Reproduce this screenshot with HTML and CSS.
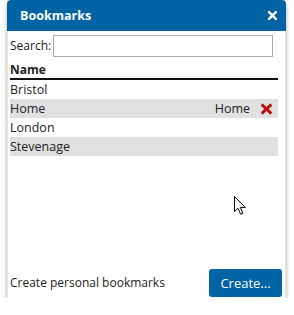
FILE: index.html
```html
<!DOCTYPE html>
<html>
<head>
<meta charset="utf-8">
<link rel="stylesheet" href="styles.css">
</head>
<body>
<div class="dialog">
  <div class="header">
    <span class="title">Bookmarks</span>
    <svg class="close" width="9" height="9" viewBox="0 0 9 9"><path d="M1 1 L8 8 M8 1 L1 8" stroke="#fff" stroke-width="2.4" stroke-linecap="square"/></svg>
  </div>
  <div class="content">
    <div class="search">
      <label>Search:</label>
      <input type="text" class="search-input">
    </div>
    <div class="list">
      <div class="list-head">Name</div>
      <div class="row"><span class="name">Bristol</span></div>
      <div class="row alt"><span class="name">Home</span><span class="right"><span class="tag">Home</span><svg class="del" width="13" height="12" viewBox="0 0 13 12"><path d="M1 2.5 L2.8 0.8 L6.5 4.4 L10.2 0.8 L12 2.5 L8.3 6 L12 9.5 L10.2 11.2 L6.5 7.6 L2.8 11.2 L1 9.5 L4.7 6 Z" fill="#d40000" stroke="#8a0000" stroke-width="0.6"/></svg></span></div>
      <div class="row"><span class="name">London</span></div>
      <div class="row alt"><span class="name">Stevenage</span></div>
    </div>
    <div class="footer">
      <span class="hint">Create personal bookmarks</span>
      <button class="create">Create...</button>
    </div>
  </div>
</div>
<svg class="cursor" width="13" height="20" viewBox="0 0 13 20"><path d="M0.5 0.5 L0.5 15.5 L4 12.2 L6.6 18.3 L8.9 17.3 L6.4 11.4 L11.3 11.4 Z" fill="#fff" stroke="#000" stroke-width="1" stroke-linejoin="round"/></svg>
</body>
</html>
```
FILE: styles.css
```css
html, body {
  margin: 0;
  padding: 0;
  background: #fff;
}
body {
  font-family: "Open Sans", "Noto Sans", sans-serif;
  font-size: 12px;
  color: #222;
  padding: 0 8px 0 7px;
  width: 279px;
}
.dialog {
  width: 279px;
  height: 298px;
  display: flex;
  flex-direction: column;
  background: #fff;
  border-radius: 4px 4px 0 0;
  box-shadow: 0 4px 4px rgba(0,0,0,0.35);
}
.header {
  height: 31px;
  flex: none;
  background: #0063a4;
  border-radius: 4px 4px 0 0;
  display: flex;
  align-items: center;
  justify-content: space-between;
  padding: 0 9px 0 13px;
  color: #fff;
}
.title {
  font-weight: 700;
  font-size: 12.5px;
}
.close {
  display: block;
}
.content {
  flex: 1;
  display: flex;
  flex-direction: column;
  border-left: 1px solid #e4e4e4;
  border-right: 1px solid #e4e4e4;
  padding: 3px 7px 1px 2px;
}
.search {
  display: flex;
  align-items: center;
  gap: 2px;
  height: 23px;
  margin-bottom: 4px;
  padding-right: 5px;
}
.search label {
  font-size: 12px;
}
.search-input {
  flex: 1;
  height: 22px;
  box-sizing: border-box;
  border: 1px solid #a9a9a9;
  margin: 0;
  padding: 0;
}
.list {
  flex: 1;
}
.list-head {
  font-weight: 700;
  font-size: 12px;
  height: 17px;
  line-height: 17px;
  border-bottom: 2px solid #111;
}
.row {
  height: 19px;
  display: flex;
  align-items: center;
  justify-content: space-between;
  font-size: 12.5px;
  color: #222;
}
.row.alt {
  background: #e0e0e0;
}
.right {
  display: flex;
  align-items: center;
  gap: 10px;
  padding-right: 5px;
}
.del {
  display: block;
}
.footer {
  display: flex;
  align-items: center;
  justify-content: space-between;
  height: 29px;
}
.hint {
  font-size: 12px;
}
.create {
  width: 73px;
  height: 28px;
  background: #0063a4;
  color: #fff;
  border: none;
  border-radius: 3px;
  font-family: "Open Sans", "Noto Sans", sans-serif;
  font-size: 13px;
  padding: 0;
  margin-right: -4px;
}
.cursor {
  position: absolute;
  left: 234px;
  top: 196px;
}
```
